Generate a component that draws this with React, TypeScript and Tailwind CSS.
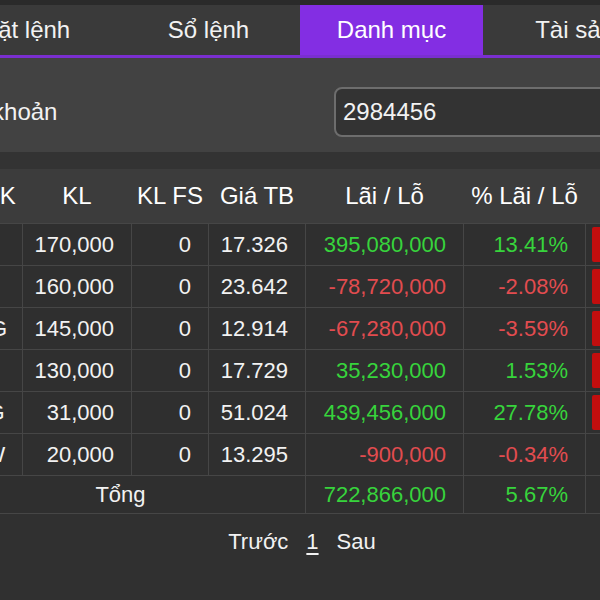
import React from 'react';

type Row = {
  code: string;
  kl: string;
  fs: string;
  avg: string;
  pnl: string;
  pct: string;
  up: boolean;
  sell: boolean;
};

const rows: Row[] = [
  { code: 'FPT', kl: '170,000', fs: '0', avg: '17.326', pnl: '395,080,000', pct: '13.41%', up: true, sell: true },
  { code: 'VIC', kl: '160,000', fs: '0', avg: '23.642', pnl: '-78,720,000', pct: '-2.08%', up: false, sell: true },
  { code: 'MWG', kl: '145,000', fs: '0', avg: '12.914', pnl: '-67,280,000', pct: '-3.59%', up: false, sell: true },
  { code: 'SSI', kl: '130,000', fs: '0', avg: '17.729', pnl: '35,230,000', pct: '1.53%', up: true, sell: true },
  { code: 'CMG', kl: '31,000', fs: '0', avg: '51.024', pnl: '439,456,000', pct: '27.78%', up: true, sell: true },
  { code: 'POW', kl: '20,000', fs: '0', avg: '13.295', pnl: '-900,000', pct: '-0.34%', up: false, sell: false },
];

const tabs = ['Đặt lệnh', 'Sổ lệnh', 'Danh mục', 'Tài sản'];

export default function App() {
  const font = { fontFamily: '"Liberation Sans", Arial, sans-serif' };

  return (
    <div className="w-[600px] h-[600px] overflow-hidden bg-[#303030] text-[#f2f2f2]" style={font}>
      {/* top strip */}
      <div className="h-[5px] bg-[#2a2a2a]" />

      {/* tabs */}
      <div className="h-[50px] bg-[#3a3a3a] overflow-hidden">
        <div className="flex ml-[-66px] h-full">
          {tabs.map((t) => (
            <div
              key={t}
              className={`w-[183px] shrink-0 h-full flex items-center justify-center text-[24px] whitespace-nowrap ${
                t === 'Danh mục' ? 'bg-[#832ee3] text-white' : ''
              }`}
            >
              {t}
            </div>
          ))}
        </div>
      </div>
      <div className="h-[3px] bg-[#7a2fd0]" />

      {/* account */}
      <div className="h-[94px] bg-[#424242] pt-[14px] flex items-center overflow-hidden">
        <div className="flex items-center ml-[-76px]">
          <span className="w-[410px] shrink-0 text-[24px] whitespace-nowrap">Số tài khoản</span>
          <div className="w-[300px] shrink-0 h-[50px] rounded-[8px] border-2 border-[#6d6d6d] bg-[#333333] pl-[7px] flex items-center text-[24px]">
            2984456
          </div>
        </div>
      </div>
      <div className="h-[17px] bg-[#333333]" />

      {/* table */}
      <div className="overflow-hidden">
        <table className="ml-[-65px] table-fixed border-collapse w-[730px]">
          <colgroup>
            <col className="w-[87px]" />
            <col className="w-[109px]" />
            <col className="w-[77px]" />
            <col className="w-[97px]" />
            <col className="w-[158px]" />
            <col className="w-[122px]" />
            <col className="w-[80px]" />
          </colgroup>
          <thead>
            <tr className="h-[54px] bg-[#3c3c3c] text-[24px] text-white">
              <th className="font-normal text-center whitespace-nowrap">Mã CK</th>
              <th className="font-normal text-center">KL</th>
              <th className="font-normal text-center whitespace-nowrap">KL FS</th>
              <th className="font-normal text-center whitespace-nowrap">Giá TB</th>
              <th className="font-normal text-center whitespace-nowrap">Lãi / Lỗ</th>
              <th className="font-normal text-center whitespace-nowrap">% Lãi / Lỗ</th>
              <th className="font-normal" />
            </tr>
          </thead>
          <tbody className="text-[22px]">
            {rows.map((r) => {
              const color = r.up ? 'text-[#37d43c]' : 'text-[#e24c4f]';
              return (
                <tr key={r.code} className="h-[42px] bg-[#2f2f2f]">
                  <td className="border border-[#464646] text-center">{r.code}</td>
                  <td className="border border-[#464646] text-right pr-[17px]">{r.kl}</td>
                  <td className="border border-[#464646] text-right pr-[17px]">{r.fs}</td>
                  <td className="border border-[#464646] text-right pr-[17px]">{r.avg}</td>
                  <td className={`border border-[#464646] text-right pr-[17px] ${color}`}>{r.pnl}</td>
                  <td className={`border border-[#464646] text-right pr-[17px] ${color}`}>{r.pct}</td>
                  <td className="border border-[#464646] pl-[6px] py-[3px]">
                    {r.sell && <div className="h-[35px] w-[60px] rounded-[2px] bg-[#c20e0e]" />}
                  </td>
                </tr>
              );
            })}
            <tr className="h-[38px] bg-[#2f2f2f]">
              <td colSpan={4} className="border border-[#464646] text-center">Tổng</td>
              <td className="border border-[#464646] text-right pr-[17px] text-[#37d43c]">722,866,000</td>
              <td className="border border-[#464646] text-right pr-[17px] text-[#37d43c]">5.67%</td>
              <td className="border border-[#464646]" />
            </tr>
          </tbody>
        </table>
      </div>

      {/* pagination */}
      <div className="pt-[14px] flex justify-center items-center text-[22px] leading-[28px] pl-[4px]">
        <span>Trước</span>
        <span className="ml-[18px] underline underline-offset-[4px]">1</span>
        <span className="ml-[18px]">Sau</span>
      </div>
    </div>
  );
}
